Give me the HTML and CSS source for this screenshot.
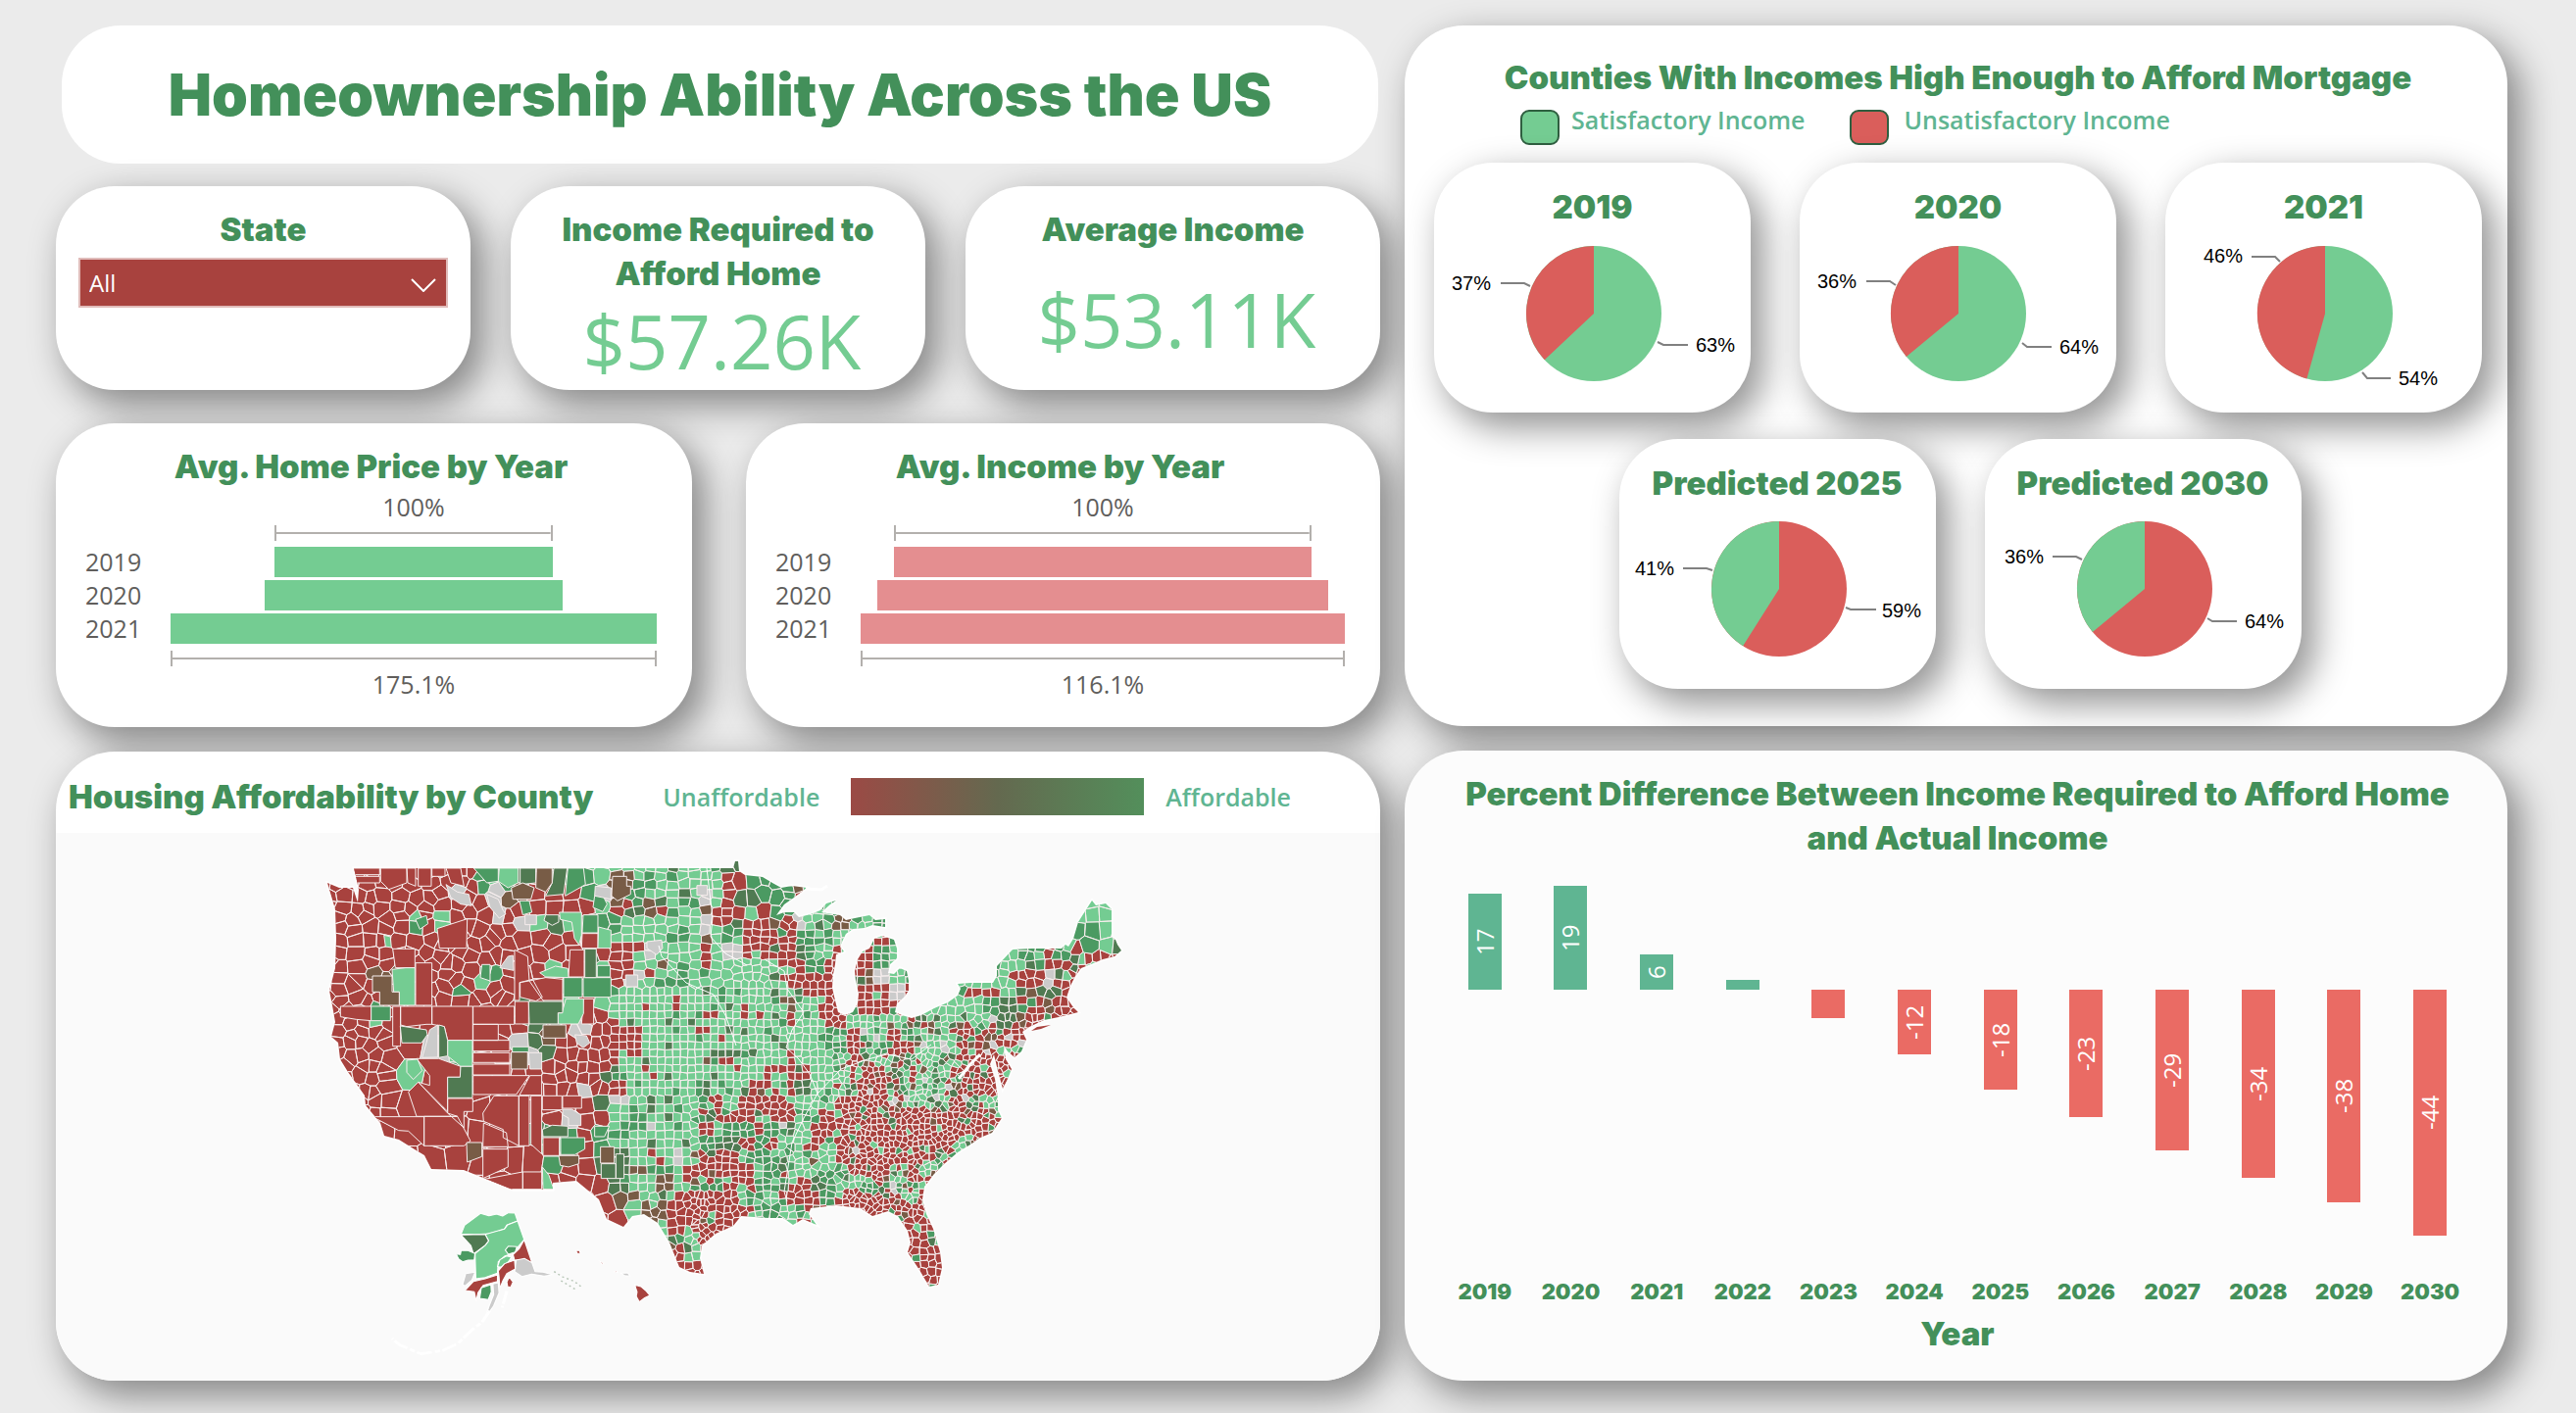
FILE: index.html
```html
<!DOCTYPE html>
<html lang="en">
<head>
<meta charset="utf-8">
<title>Homeownership Ability Across the US</title>
<link rel="stylesheet" href="styles.css">
</head>
<body>
<main class="dashboard">
  <div class="column">
    <header class="card banner"><h1>Homeownership Ability Across the US</h1></header>

    <div class="kpis">
      <section class="card kpi">
        <label class="heading" for="state">State</label>
        <div class="picker">
          <select id="state"><option>All</option></select>
          <svg class="chevron" viewBox="0 0 26 14" aria-hidden="true"><path d="M1 1 13 13 25 1"/></svg>
        </div>
      </section>
      <section class="card kpi">
        <h2 class="heading">Income Required to Afford Home</h2>
        <p class="value">$57.26K</p>
      </section>
      <section class="card kpi">
        <h2 class="heading">Average Income</h2>
        <p class="value value-roomy">$53.11K</p>
      </section>
    </div>

    <div class="funnels">
      <section class="card funnel funnel-price">
        <h2 class="heading">Avg. Home Price by Year</h2>
        <div class="funnel-grid">
          <span class="percent">100%</span>
          <i class="bracket" style="width:57.1%"></i>
          <span class="year">2019</span><i class="bar" style="width:57.1%"></i>
          <span class="year">2020</span><i class="bar" style="width:61.4%"></i>
          <span class="year">2021</span><i class="bar" style="width:100%"></i>
          <i class="bracket" style="width:100%"></i>
          <span class="percent">175.1%</span>
        </div>
      </section>
      <section class="card funnel funnel-income">
        <h2 class="heading">Avg. Income by Year</h2>
        <div class="funnel-grid">
          <span class="percent">100%</span>
          <i class="bracket" style="width:86.1%"></i>
          <span class="year">2019</span><i class="bar" style="width:86.1%"></i>
          <span class="year">2020</span><i class="bar" style="width:93%"></i>
          <span class="year">2021</span><i class="bar" style="width:100%"></i>
          <i class="bracket" style="width:100%"></i>
          <span class="percent">116.1%</span>
        </div>
      </section>
    </div>

    <section class="card map-card">
      <div class="map-head">
        <h2 class="heading">Housing Affordability by County</h2>
        <div class="scale"><span class="key">Unaffordable</span><i class="ramp"></i><span class="key">Affordable</span></div>
      </div>
      <svg class="map" viewBox="57 849 1351 559" role="img" aria-label="Map of counties by affordability">
        <defs>
          <path id="outline" d="M361 885H748L750 878 753 878 754 888 760 892 778 894 788 900 797 905 808 903 823 905 810 915 800 922 792 933 800 930 810 930 815 935 827 932 837 928 843 921 853 918 847 922 838 930 850 932 857 933 863 938 872 936 887 933 893 938 903 937 903 945 890 943 882 946 870 947 863 952 860 958 857 965 861 970 853 973 852 983 850 993 849 1007 852 1020 855 1032 862 1035 870 1032 875 1023 876 1013 873 1000 872 990 875 978 880 970 887 967 892 957 900 954 912 958 915 967 915 977 908 983 906 992 912 993 918 987 925 990 927 1000 927 1010 922 1017 915 1023 913 1032 920 1035 930 1038 940 1035 953 1028 967 1022 977 1015 980 1008 977 1003 990 1002 1013 1002 1017 995 1017 985 1033 968 1053 967 1083 967 1087 963 1090 965 1095 957 1100 940 1105 932 1114 918 1118 923 1128 921 1134 927 1134 955 1138 958 1140 963 1144 969 1137 975 1125 978 1113 983 1103 987 1097 995 1092 1005 1088 1017 1095 1027 1100 1032 1092 1034 1080 1037 1065 1040 1050 1047 1043 1052 1047 1060 1042 1072 1035 1078 1028 1072 1024 1066 1026 1080 1032 1090 1028 1100 1023 1110 1018 1092 1014 1075 1010 1085 1015 1100 1018 1120 1018 1132 1022 1140 1012 1155 1000 1160 990 1167 977 1175 963 1187 953 1197 943 1210 941 1223 945 1238 952 1253 959 1277 961 1293 957 1310 948 1312 938 1295 926 1277 929 1267 926 1255 916 1240 906 1235 890 1240 878 1232 853 1229 827 1232 825 1238 833 1249 819 1243 809 1249 799 1242 784 1242 756 1240 748 1250 730 1258 716 1270 714 1283 718 1299 704 1297 693 1292 683 1267 671 1247 657 1238 645 1240 636 1251 619 1243 611 1223 588 1204 564 1206 564 1213 523 1213 473 1193 440 1192 433 1178 423 1172 407 1162 392 1158 388 1145 373 1127 372 1117 365 1107 355 1093 347 1080 345 1063 338 1057 342 1042 339 1025 336 1010 342 987 343 957 342 927 334 900 346 905 360 905 365 920 366 907 363 893Z"/>
          <clipPath id="land"><use href="#outline"/></clipPath>
        </defs>
        <use href="#outline" class="coast"/>
        <g clip-path="url(#land)">
          <g id="counties"></g>
          <g class="west" transform="translate(300 850) scale(.3333)">
            <path class="red" d="M326 528H422V583H405L345 590 326 585ZM422 528H547V632H470L460 590 422 583ZM548 528H674V583H548ZM302 528H326V650H302ZM375 688 443 688 510 712V745H470V850L380 760 415 770V740ZM548 583H625V632H548ZM548 632H660V665H548ZM380 760 470 855 500 865H375L350 790ZM398 865H500L540 940 520 955H398ZM240 866H398V955L350 910 320 908ZM578 855 612 802H688V955L640 930V905L580 880ZM688 802H720V955H688ZM725 802H758V980L725 950ZM470 810H547V850H520V900L470 855ZM580 885 650 915 655 958H578ZM578 965H655V1020L578 1055ZM700 1035H758V1088H700ZM578 1058 700 1035V1088H660ZM372 395H422V525H372ZM675 355 715 375 720 450 690 455V510H675ZM676 513H718V582H676ZM548 670H660V700H548ZM548 705H660V738H548ZM760 802H820V845H760ZM822 802H880V840H822ZM762 930H812V985H762ZM886 505H917V582H880ZM882 305H930V350H880ZM845 355H888V438H840ZM548 740H720L680 798H548ZM722 740H758V800H690ZM142 528H236V572L190 568 142 560ZM265 105H345V150L290 170 265 145ZM438 290 530 260 528 350H445ZM182 105H262V125H182ZM182 130H262V150H182ZM302 352H370V410H310ZM345 105H372V160L348 150ZM380 105H420V160H380ZM422 105H462V130H422ZM465 105H510L520 160 480 150ZM692 455 730 445 760 500 740 512 692 500ZM720 450 770 440 822 445V510H762Z"/>
            <path class="light" d="M300 415 342 410H370V525H322V484H305ZM470 632H546V712H510L470 680ZM345 693 378 690 392 725 365 752 345 730ZM832 505H886V550L870 582H808V548H820ZM812 240H880V310L872 340 858 320 850 270 815 262ZM932 285 970 295V350H930ZM752 425 800 405 838 412 840 440 770 438ZM760 1020 780 1045 795 1088H762ZM628 105H686V150L655 165 625 145ZM275 310 295 315 298 348 280 345Z"/>
            <path class="mid" d="M550 105H625V145L590 150ZM690 205H720L728 240 700 248ZM838 105H886L892 155 830 190ZM825 440H882V500H825ZM885 440H970V500H885ZM236 528H295V572H236ZM816 930H890V965L860 982H816ZM575 400H600V450L570 440ZM885 248H930V303H882ZM668 652H718V668H668ZM920 190 945 188 958 215 945 238 915 225ZM372 262 405 250 410 275 385 292ZM920 895H965L950 927H920ZM928 403H968V438H928Z"/>
            <path class="dark" d="M692 105H740V150L692 155ZM795 105H836L825 185 770 190 790 150ZM890 352H925V440H890ZM718 513H822V548H808V582H720ZM325 588 405 600 408 615 390 640H330ZM443 585 460 590 470 632V680L443 685ZM510 712H546V808H470V745H508ZM940 1010H985V1055H940ZM985 980H1010V1055H985ZM760 905 790 892 838 895V927H762ZM770 248H810V270L790 280 765 265Z"/>
            <path class="brown" d="M240 435H300V484H322V525H262V484H240ZM665 165 700 150 735 165 725 200 670 200ZM762 585H832V625H762ZM665 668H715V720H665ZM810 985H872V1010L840 1020 815 1015ZM975 130H1018V160H1030V185L990 205 972 190ZM528 945H575V988L530 1005ZM742 105H790V150L770 178 740 165ZM938 958H980V1008H938Z"/>
            <path class="grey" d="M465 155 500 178 535 185 543 220 510 215 480 195ZM590 185 625 200 640 235 648 245 628 258 600 225ZM630 410 655 375 670 372 672 418ZM392 685 405 640 415 600 440 585V684ZM718 670H758V720H722ZM822 843H850L878 860V893H840V870L822 860ZM860 615 895 618 905 640 885 655 865 640ZM922 160 970 165V200L945 195 920 190ZM1080 330 1125 325 1128 350 1110 370 1080 350ZM1015 432H1052V468H1015ZM707 248H742V278H707ZM1233 158H1265V188H1233Z"/>
          </g>
        </g>
        <path class="river" d="M721 885 724 910 727 935 725 955 740 972 762 984M672 964 675 975 700 1002 728 1014 740 1035 751 1066M780 978 800 990 803 1008 820 1032 808 1050 802 1068 815 1080 826 1095 834 1115 820 1140 808 1165 804 1190 800 1215 803 1225M834 1115 858 1090 885 1080 905 1075 930 1080 950 1065"/>
        <path class="islet" d="M978 1100 990 1085 1000 1075M1050 1050 1070 1044M822 906 838 907 844 903"/>
        <path class="red" d="M1052 1051 1058 1047 1072 1045 1062 1049Z"/>
        <g class="far" transform="translate(400 1190) scale(.3954 .3333)">
          <path class="light" d="M178 205 187 178 210 158 228 142 250 149 270 144 285 150 300 140 317 141 324 165 296 178 290 190 250 204 215 206Z"/>
          <path class="light" d="M324 165 341 222 328 240 310 265 290 273 274 290 272 325 240 338 216 342 214 265 240 240 249 226 240 206 290 190 298 177Z"/>
          <path class="dark" d="M178 208 240 206 249 226 240 240 225 253 210 266 203 240Z"/>
          <path class="mid" d="M165 266 176 268 178 256 196 256 214 265 212 284 196 285 182 290 172 282Z"/>
          <path class="mid" d="M292 254 300 242 322 244 318 260 300 267Z"/>
          <path class="light" d="M272 305 278 284 296 272 308 276 300 290 282 306Z"/>
          <path class="red" d="M341 222 361 293 342 284 316 285 312 268 328 250Z"/>
          <path class="grey" d="M320 285 342 280 361 293 369 320 390 322 415 330 392 334 360 328 335 335 316 320Z"/>
          <path class="red" d="M276 338 274 318 290 296 316 285 318 312 296 326 286 348 278 372Z"/>
          <path class="grey" d="M182 360 190 326 214 322 206 346 188 364Z"/>
          <path class="red" d="M188 378 210 350 240 342 272 330 272 350 235 362 222 384 217 410 212 382Z"/>
          <path class="mid" d="M226 402 230 370 255 360 256 382 248 406Z"/>
          <path class="red" d="M296 352 302 337 312 352 306 368 298 366Z"/>
          <path class="grey" d="M260 358 274 354 276 385 262 425 240 462 252 420 262 390Z"/>
          <path class="trail" d="M252 440 232 475 205 500 170 540 130 562 75 572 20 545 0 525M296 380 284 430"/>
          <path class="panhandle" d="M418 320 440 336 470 350 492 370M436 348 472 374"/>
          <path class="red" d="M474 256 484 256 486 265 478 265ZM534 288 547 294 542 298ZM572 320 580 318 582 323Z"/>
          <path class="grey" d="M590 325 608 324 614 334 600 332Z"/>
          <path class="red" d="M626 361 642 366 656 380 665 393 652 400 638 413 630 396 632 382Z"/>
        </g>
      </svg>
    </section>
  </div>

  <div class="column">
    <section class="card pies-card">
      <h2 class="heading">Counties With Incomes High Enough to Afford Mortgage</h2>
      <div class="legend">
        <span class="key"><i class="swatch swatch-good"></i>Satisfactory Income</span>
        <span class="key key-wide"><i class="swatch swatch-bad"></i>Unsatisfactory Income</span>
      </div>
      <div class="pies">
        <article class="card pie"><h3 class="heading">2019</h3>
          <svg viewBox="0 70 323 185"><circle class="good" cx="163" cy="154" r="69"/><path class="bad" d="M163 154V85A69 69 0 0 0 112.700 201.200Z"/><path class="lead" d="M68 123H92L98 126M228 183 234 186H259"/><text class="end" x="58" y="130">37%</text><text x="267" y="193">63%</text></svg>
        </article>
        <article class="card pie"><h3 class="heading">2020</h3>
          <svg viewBox="0 70 323 185"><circle class="good" cx="162" cy="154" r="69"/><path class="bad" d="M162 154V85A69 69 0 0 0 108.800 198Z"/><path class="lead" d="M68 121H92L98 125M227 184 232 188H257"/><text class="end" x="58" y="128">36%</text><text x="265" y="195">64%</text></svg>
        </article>
        <article class="card pie"><h3 class="heading">2021</h3>
          <svg viewBox="0 70 323 185"><circle class="good" cx="163" cy="154" r="69"/><path class="bad" d="M163 154V85A69 69 0 0 0 144.400 220.500Z"/><path class="lead" d="M88 96H112L117 101M201 214 206 220H230"/><text class="end" x="79" y="102">46%</text><text x="238" y="227">54%</text></svg>
        </article>
      </div>
      <div class="pies">
        <article class="card pie"><h3 class="heading">Predicted 2025</h3>
          <svg viewBox="0 70 323 185"><circle class="bad" cx="163" cy="153" r="69"/><path class="good" d="M163 153V84A69 69 0 0 0 126.100 211.300Z"/><path class="lead" d="M65 132H89L95 134M231 172 236 174H262"/><text class="end" x="56" y="139">41%</text><text x="268" y="182">59%</text></svg>
        </article>
        <article class="card pie"><h3 class="heading">Predicted 2030</h3>
          <svg viewBox="0 70 323 185"><circle class="bad" cx="163" cy="153" r="69"/><path class="good" d="M163 153V84A69 69 0 0 0 109.800 197Z"/><path class="lead" d="M69 120H93L99 123M227 183 232 186H257"/><text class="end" x="60" y="127">36%</text><text x="265" y="193">64%</text></svg>
        </article>
      </div>
    </section>

    <section class="card diff-card">
      <h2 class="heading">Percent Difference Between Income Required to Afford Home <br>and Actual Income</h2>
      <div class="columns">
        <div class="slot"><div class="up"><b style="height:98px">17</b></div><div class="down"></div><span>2019</span></div>
        <div class="slot"><div class="up"><b style="height:106px">19</b></div><div class="down"></div><span>2020</span></div>
        <div class="slot"><div class="up"><b style="height:36px">6</b></div><div class="down"></div><span>2021</span></div>
        <div class="slot"><div class="up"><b style="height:10px"></b></div><div class="down"></div><span>2022</span></div>
        <div class="slot"><div class="up"></div><div class="down"><b style="height:29px"></b></div><span>2023</span></div>
        <div class="slot"><div class="up"></div><div class="down"><b style="height:66px">-12</b></div><span>2024</span></div>
        <div class="slot"><div class="up"></div><div class="down"><b style="height:102px">-18</b></div><span>2025</span></div>
        <div class="slot"><div class="up"></div><div class="down"><b style="height:130px">-23</b></div><span>2026</span></div>
        <div class="slot"><div class="up"></div><div class="down"><b style="height:164px">-29</b></div><span>2027</span></div>
        <div class="slot"><div class="up"></div><div class="down"><b style="height:192px">-34</b></div><span>2028</span></div>
        <div class="slot"><div class="up"></div><div class="down"><b style="height:217px">-38</b></div><span>2029</span></div>
        <div class="slot"><div class="up"></div><div class="down"><b style="height:251px">-44</b></div><span>2030</span></div>
      </div>
      <p class="heading axis">Year</p>
    </section>
  </div>
</main>
<script src="map.js"></script>
</body>
</html>
```
FILE: styles.css
```css
* { box-sizing: border-box; }
body { margin: 0; background: #ebebeb; font-family: "Open Sans", "Noto Sans", sans-serif; }
h1, h2, h3, p { margin: 0; }
i { font-style: normal; }

.dashboard { display: grid; grid-template-columns: 1351fr 1125fr; gap: 25px; padding: 26px 70px 34px 57px; }
.column { display: flex; flex-direction: column; min-width: 0; }

.card { background: #fff; border-radius: 60px; box-shadow: 12px 14px 36px 2px rgba(0, 0, 0, .42); }
.heading { display: block; font-family: Inter, "Open Sans", sans-serif; font-weight: 900; font-size: 33px; line-height: 45px; color: #43905a; text-align: center; }

.banner { margin: 0 2px 23px 6px; padding: 36px 0 35px; box-shadow: none; }
.banner h1 { font-family: Inter, "Open Sans", sans-serif; font-weight: 900; font-size: 59px; line-height: 70px; color: #43905a; text-align: center; }

.kpis { display: grid; grid-template-columns: repeat(3, 1fr); gap: 41px; margin-bottom: 34px; }
.kpi { min-height: 208px; padding: 22px 23px 0; }
.value { font-size: 76px; line-height: 92px; color: #74cc92; text-align: center; margin: 0 -8px 0 0; }
.value-roomy { padding-top: 23px; }
.picker { position: relative; margin-top: 6px; }
.picker select { appearance: none; display: block; width: 100%; height: 51px; padding: 0 9px; border: 2px solid #e0bcba; border-radius: 0; background: #a8423e; color: #fff; font: 24px "Open Sans", sans-serif; }
.chevron { position: absolute; right: 12px; top: 21px; width: 26px; height: 14px; fill: none; stroke: #fff; stroke-width: 2; }

.funnels { display: grid; grid-template-columns: 649fr 647fr; gap: 55px; margin-bottom: 25px; }
.funnel { padding: 22px 36px 28px 30px; }
.funnel-grid { display: grid; grid-template-columns: 87px 1fr; row-gap: 3px; font-size: 25px; line-height: 31px; color: #605e5c; }
.percent, .bracket { grid-column: 2; justify-self: center; }
.percent:first-child { padding-top: 3px; }
.bracket { height: 16px; margin: 0 0 3px; border: solid #b3b0ad; border-width: 0 2px; background: linear-gradient(#b3b0ad, #b3b0ad) center / 100% 2px no-repeat; }
.bar { justify-self: center; height: 31px; }
.bar + .bracket { margin: 4px 0 0; }
.funnel-price .bar { background: #74cc92; }
.funnel-income .bar { background: #e48e90; }

.map-card { overflow: hidden; }
.map-head { display: flex; align-items: center; min-height: 83px; padding: 9px 0 0 13px; }
.scale { display: flex; align-items: center; gap: 22px; margin: 0 91px 0 auto; }
.key { font-size: 25px; font-weight: 600; line-height: 20px; color: #5fb592; }
.scale .key:first-child { margin-right: 10px; }
.ramp { width: 299px; height: 38px; background: linear-gradient(90deg, #9b4a45, #64694f 50%, #538f5b); }
.map { display: block; width: 100%; background: #fafafa; }
.coast { fill: #fff; stroke: #fff; stroke-width: 3; }
.river { fill: none; stroke: #fff; stroke-width: 1; }
.islet { fill: none; stroke: #fff; stroke-width: 3; }
#counties path { stroke: #f7eeee; stroke-width: 1; stroke-linejoin: round; }
.west path { stroke: #f7eeee; stroke-width: 3; stroke-linejoin: round; }
.far path { stroke: #fff; stroke-width: 3; stroke-linejoin: round; }
.map .red { fill: #a8423e; }
.map .light { fill: #74cc92; }
.map .mid { fill: #4b9a62; }
.map .dark { fill: #507a52; }
.map .grey { fill: #cbcbcb; }
.map .brown { fill: #785c46; }
.far .trail { fill: none; stroke-width: 8; stroke-dasharray: 40 6 14 8; }
.far .panhandle { fill: none; stroke: #b5c4b4; stroke-width: 4; stroke-dasharray: 5 8; }

.pies-card { margin-bottom: 25px; padding: 31px 26px 38px 30px; }
.legend { display: flex; gap: 45px; margin: 10px 0 18px 88px; }
.legend .key { display: flex; gap: 12px; }
.legend .key-wide { gap: 16px; }
.swatch { width: 40px; height: 36px; border: 2px solid #2f5f40; border-radius: 9px; }
.swatch-good { background: #74cc92; }
.swatch-bad { background: #da5e5b; }
.pies { display: flex; justify-content: center; gap: 50px; }
.pies + .pies { margin-top: 27px; padding-left: 4px; }
.pie { flex: 0 1 323px; padding-top: 24px; }
.pie .heading { line-height: 42px; }
.pie svg { display: block; width: 100%; margin-top: 4px; font: 20px "Liberation Sans", sans-serif; }
.pie .good { fill: #74cc92; }
.pie .bad { fill: #da5e5b; }
.lead { fill: none; stroke: #808080; stroke-width: 2; }
.end { text-anchor: end; }

.diff-card { flex: 1; padding: 22px 35px 24px 38px; background: #fcfcfc; }
.columns { display: grid; grid-template-columns: repeat(12, 1fr); }
.slot { display: flex; flex-direction: column; align-items: center; }
.slot span { font: 900 22px/40px Inter, sans-serif; color: #43905a; }
.up, .down { display: flex; height: 132px; align-items: flex-end; }
.down { height: 288px; align-items: flex-start; }
.slot b { width: 34px; background: #5fb592; color: #fff; font-weight: 400; font-size: 24px; line-height: 34px; text-align: center; writing-mode: vertical-rl; transform: rotate(180deg); }
.down b { background: #ea6b64; }
.axis { line-height: 46px; }
```
FILE: map.js
```js
// County fills: one letter per 14-unit square, west to east.
// R red, G light green, M green, D dark green, B brown, W no data,
// r mostly red, g mostly green, x mixed.
var ROWS = [
  'RRRRRRRRRRRMGGDRDMMGGGGGGGGGMDMM',
  'RRRRRRRRRRRMGDDRDMMDBBGMGMGGGRMMMMR',
  'RRRRRRRRRWRRWBBRRRRMWBMGGGGWGRDMMMRG',
  'RRRRRRRRRRRRWRMRRRRMGRDBRGGBRRRRMMMGGMG',
  'RRRRRRMRGRRRRRWGDGMDMGGGGGGWRRRRBRWGGBGGMDGGGGGGGGGGGGMMGM',
  'RRRRGRRRRRRRRRRRRRGRGGGGGMGBGMRRRRMMMGGRRMGGGGGGGGGGGGMMMD',
  'RRRRRRRRRRRRRRRRRRRDRRRWGGGRGWRRRRDMGRGRMGGGGGGGGGMMRMRMRD',
  'RRRRRRRRRRRRWRRRGRRDMRRGBMGRGGRRRRRMRRRRMGMGGGGGMGMDRRDRRR',
  'RRRBBGRRRRRMRRRRRMMMMRWRMMGMGGGGBRRRRRRBWGMGGGGGGGRRWRRRWR',
  'RRRRBGRRRMRRRRRRRMMMMGGGGGGGMGGGGGRRRRRRRWRGGxxxxGDrDrrrrr',
  'RRRMRRRRRRRRRRDDDGRMMGGRGRGGMGRGGBGGRRRRRRGGGGGGMDRRBRRRRR',
  'RRRMRRRRRRRRRRDDDGGRRGGGGGGRRGRRGRGGRRgxGgxxgGgggDBRRRRRRR',
  'RRRRRDDWDRRRRRRBBRWRRRRGGGGRRGGGDGGGMgRggRMggxxxxrRRRRRRRR',
  'RRRRRRRWDGGRRMWDDRRRRRRGGGGGGGRGGGGGMMRgMRRgggxrrrgxRRRRRR',
  'RRRRRRGRRRGRRBWRRRRRRGGGGGGBRrRGRRGGGgRxxxxgggxrrrxrRRRRRR',
  'RRRRRRGRRDDRRRRRRRRRDMGRGGGGGRrxRRRGGgxRRxrggxrrrrRRRR',
  'RRRRRRRRRDDRRRRRRRWRRRGGGGGDGGRRxxDGgxrrrxgggrrrrrRR',
  'RRRRRRRRRRRRRRRRRRRRGWGGGMGMRGRRRRGGgRRRRrgggrrxggR',
  'RRRRRRRRRRRRRRRRRWRRRGMGGGGxxRRRRRMgRRRRRRRRrRRRxGRR',
  'RRRRRRRRRRRRRRRDDRRMGMDWGGGRGMMrMgGRRRRRRRRRRRrrxGRR',
  'RRRRRRRRRRBRRRRRMMRGMGGGGGGMxDRMRgGRMrRRRRRRRRgxrR',
  'RRRRRRRRRRBRRRRRBBRRBDMRRWgRRRMMgxGgGRrRRRRRxxgRRR',
  'RRRRRRRRRRRRRRRGDRRRDDBMMGRRRRRxMxgGMMxRRxrgxRRRRR',
  'RRRRRRRRRRRRRRRGRRRRGDGGBGxxMRRMMxRDMGGMxgxRRRR',
  'RRRRRRRRRRRRRRRRRRRRRBBGGRRRRRMMGxrRMRRRRrgRRR',
  'RRRRRRRRRRRRRRRRRRRRRRGBBRRRRRrMMGMxRRRRRRRRRR',
  'RRRRRRRRRRRRRRRRRRRRRRRBGRRxRRRMMMRxRRRRR',
  'RRRRRRRRRRRRRRRRRRRRRRRRGDGRRDRRR',
  'RRRRRRRRRRRRRRRRRRRRRRRRBRGRRRRR',
  'RRRRRRRRRRRRRRRRRRRRRRRRRRRRRRRR'
];
// Blocks of counties: left, top, right, bottom, width, height, irregularity
var ZONES = [
  [325, 870, 475, 1025, 15, 12, .75], [475, 870, 525, 1025, 14, 14, .8], [525, 870, 624, 1045, 18, 16, .5],
  [325, 1025, 400, 1140, 12, 12, .8], [400, 1025, 482, 1195, 24, 28, .35],
  [325, 1140, 400, 1195, 24, 20, .4], [482, 1025, 554, 1117, 20, 16, .5], [482, 1117, 554, 1225, 20, 25, .4],
  [554, 1045, 624, 1117, 12, 12, .6], [554, 1117, 624, 1215, 16, 16, .45], [540, 1215, 645, 1270, 22, 22, .5],
  [624, 870, 748, 1007, 11, 9, .4], [624, 1007, 748, 1117, 8, 8, .15], [624, 1117, 705, 1215, 9, 9, .2],
  [645, 1215, 725, 1330, 9, 9, .5], [705, 1117, 860, 1270, 8, 7, .55], [725, 1270, 760, 1290, 8, 8, .5],
  [748, 870, 800, 940, 14, 16, .4], [748, 940, 850, 1000, 9, 8, .4], [800, 870, 910, 940, 10, 8, .5],
  [748, 1000, 850, 1117, 8, 8, .3], [850, 940, 940, 1035, 8, 8, .2], [850, 1035, 960, 1075, 7, 7, .4],
  [850, 1075, 1060, 1123, 6, 6, .8], [860, 1123, 1050, 1240, 6, 6, .8], [860, 1240, 970, 1340, 8, 8, .6],
  [940, 960, 1092, 1035, 9, 9, .5], [960, 1035, 1110, 1075, 7, 7, .7],
  [1092, 910, 1150, 975, 13, 17, .5], [1092, 975, 1150, 1035, 7, 8, .7]
];
var MIX = {
  r: 'RRRRRRRRBGWD', g: 'GGGGGGGGGMMDBW', x: 'RRRRGGGMMDDB',
  R: 'R', G: 'GGGGGGGGGGGGGGGGGGMD', M: 'MMMMMMG', D: 'DDDDDM', B: 'B', W: 'W'
};
var NAMES = { R: 'red', G: 'light', M: 'mid', D: 'dark', B: 'brown', W: 'grey' };

var state = 20213;
function random() {
  state = (state * 16807) % 2147483647;
  return state / 2147483647;
}

function fillAt(x, y) {
  var row = Math.max(0, Math.min(ROWS.length - 1, Math.floor((y - 878) / 14)));
  var col = Math.max(0, Math.floor((x - 334) / 14));
  var letter = ROWS[row][col] || (row > 7 ? 'R' : 'G');
  // The plains are light green, with single red counties among them
  var plains = (x > 652 && x < 800 && y > 975 && y < 1105) || (x > 640 && x < 715 && y >= 1105 && y < 1185);
  if (plains && letter !== 'G' && random() < .65) letter = 'G';
  if (x > 720 && letter === 'R') letter = random() < .8 ? 'R' : 'x';
  var set = MIX[letter];
  return set[Math.floor(random() * set.length)];
}

var seeds = [];
ZONES.forEach(function (z) {
  var cols = Math.max(1, Math.round((z[2] - z[0]) / z[4]));
  var rows = Math.max(1, Math.round((z[3] - z[1]) / z[5]));
  var w = (z[2] - z[0]) / cols, h = (z[3] - z[1]) / rows;
  for (var r = 0; r < rows; r++) {
    for (var c = 0; c < cols; c++) {
      seeds.push([
        z[0] + (c + .5 + (random() - .5) * z[6]) * w,
        z[1] + (r + .5 + (random() - .5) * z[6]) * h
      ]);
    }
  }
});

// Keeps the part of a polygon that lies nearer to a than to b
function cut(poly, a, b) {
  var mx = (a[0] + b[0]) / 2, my = (a[1] + b[1]) / 2, nx = b[0] - a[0], ny = b[1] - a[1], out = [];
  for (var i = 0; i < poly.length; i++) {
    var p = poly[i], q = poly[(i + 1) % poly.length];
    var dp = (p[0] - mx) * nx + (p[1] - my) * ny, dq = (q[0] - mx) * nx + (q[1] - my) * ny;
    if (dp <= 0) out.push(p);
    if (dp < 0 !== dq < 0) {
      var t = dp / (dp - dq);
      out.push([p[0] + (q[0] - p[0]) * t, p[1] + (q[1] - p[1]) * t]);
    }
  }
  return out;
}

var shapes = {};
seeds.forEach(function (s) {
  var x = s[0], y = s[1];
  var poly = [[x - 26, y - 26], [x + 26, y - 26], [x + 26, y + 26], [x - 26, y + 26]];
  seeds.forEach(function (o) {
    if (o !== s && Math.abs(o[0] - x) < 48 && Math.abs(o[1] - y) < 48) poly = cut(poly, s, o);
  });
  if (poly.length < 3) return;
  var key = NAMES[fillAt(x, y)];
  shapes[key] = (shapes[key] || '') + 'M' + poly.map(function (p) {
    return p[0].toFixed(1) + ' ' + p[1].toFixed(1);
  }).join('L') + 'Z';
});
var layer = document.getElementById('counties');
Object.keys(shapes).forEach(function (key) {
  var path = document.createElementNS('http://www.w3.org/2000/svg', 'path');
  path.setAttribute('class', key);
  path.setAttribute('d', shapes[key]);
  layer.appendChild(path);
});
```
